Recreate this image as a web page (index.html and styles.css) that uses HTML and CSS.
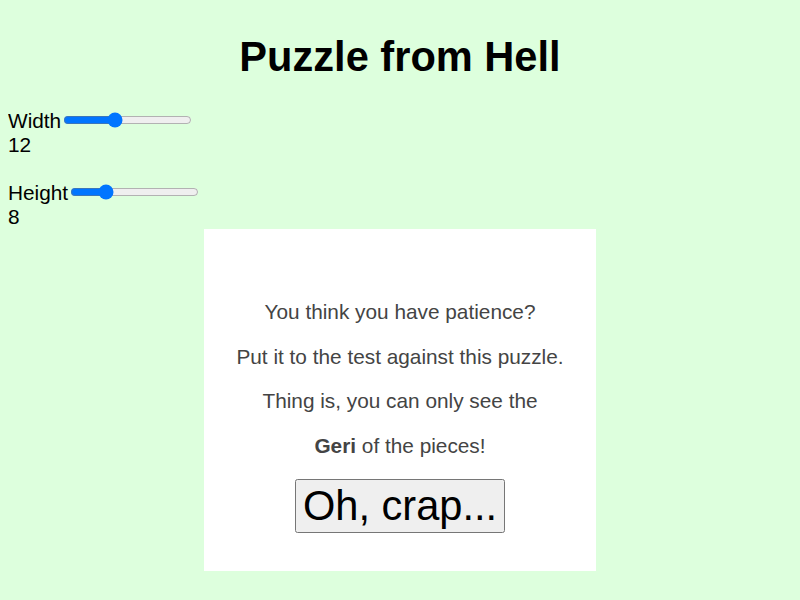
FILE: index.html
```html
<!DOCTYPE html>
<html lang="en">
<head>
    <meta charset="UTF-8">
    <meta name="viewport" content="width=device-width, initial-scale=1.0">
    <title>Puzzle from Hell</title>
    <link rel="stylesheet" href="styles.css">
</head>
<body>
    <h1>Puzzle from Hell</h1>

    <div class="settings">
        <div class="field">
            <label for="width">Width</label><input type="range" id="width" min="2" max="28" value="12"><br>
            <span id="widthValue">12</span>
        </div>
        <div class="field">
            <label for="height">Height</label><input type="range" id="height" min="2" max="26" value="8"><br>
            <span id="heightValue">8</span>
        </div>
    </div>

    <div class="intro">
        <p>You think you have patience?</p>
        <p>Put it to the test against this puzzle.</p>
        <p>Thing is, you can only see the</p>
        <p><b>Geri</b> of the pieces!</p>
        <button id="start">Oh, crap...</button>
    </div>

    <script>
        ['width', 'height'].forEach(id => {
            const slider = document.getElementById(id);
            const value = document.getElementById(id + 'Value');
            slider.addEventListener('input', () => {
                value.textContent = slider.value;
            });
        });
    </script>
</body>
</html>
```

FILE: styles.css
```css
body {
    font-family: 'Liberation Sans', Arial, sans-serif;
    font-size: 1.3em;
    background-color: #dfd;
    margin: 8px;
}
h1 {
    font-size: 2em;
    text-align: center;
    margin: 25px 0 28px;
}
.field + .field {
    margin-top: 24px;
}
.intro {
    width: 50%;
    margin: 0 auto;
    padding: 50px 0 38px;
    background-color: #fff;
    text-align: center;
    color: #444;
}
.intro button {
    font-family: inherit;
    font-size: 2em;
    color: #000;
}
```
